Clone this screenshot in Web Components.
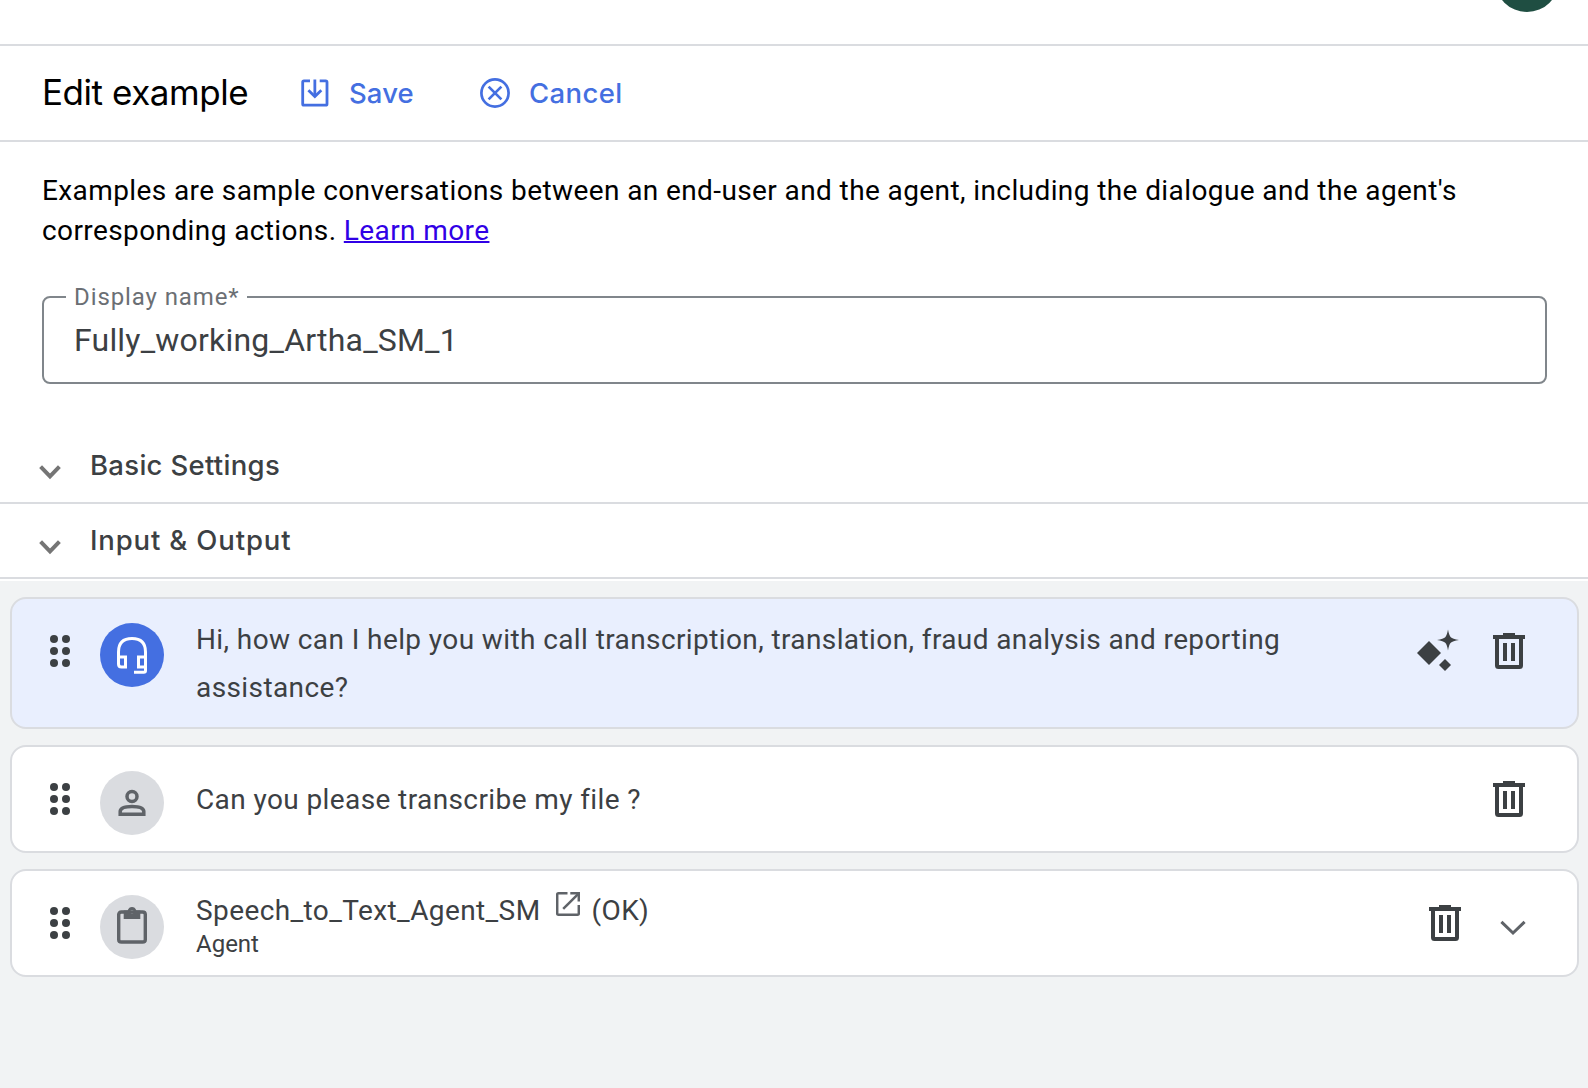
<!DOCTYPE html>
<html lang="en">
<head>
<meta charset="utf-8">
<title>Edit example</title>
<style>
html,body{margin:0;height:100%}
body{background:#fff;font-family:Roboto,"Liberation Sans",sans-serif;color:#000;overflow:hidden}
</style>
</head>
<body>
<example-editor></example-editor>
<script>
const ICONS = {
  save: [28, 28, '<g fill="none" stroke="currentColor"><path d="M9 1.9H3Q1.7 1.9 1.7 3.2V24.9Q1.7 26.2 3 26.2H24.7Q26 26.2 26 24.9V3.2Q26 1.9 24.7 1.9H18.7" stroke-width="2.8"/><path d="M13.85 .5V17" stroke-width="2.8"/><path d="M7.4 11.2L13.85 17.5L20.3 11.2" stroke-width="2.8"/></g>'],
  cancel: [30, 30, '<g fill="none" stroke="currentColor" stroke-width="2.7"><circle cx="15" cy="15" r="13.6"/><path d="M8.6 8.6L21.4 21.4M21.4 8.6L8.6 21.4"/></g>'],
  fold: [22, 15, '<path d="M1.6 1.6L11 11.3L20.4 1.6" fill="none" stroke="currentColor" stroke-width="4"/>'],
  chevron: [26, 16, '<path d="M1.4 1.8L13 13L24.6 1.8" fill="none" stroke="currentColor" stroke-width="3"/>'],
  drag: [20, 32, '<g fill="currentColor"><circle cx="4" cy="4" r="4"/><circle cx="16" cy="4" r="4"/><circle cx="4" cy="16" r="4"/><circle cx="16" cy="16" r="4"/><circle cx="4" cy="28" r="4"/><circle cx="16" cy="28" r="4"/></g>'],
  trash: [32, 36, '<g fill="none" stroke="currentColor" stroke-width="4"><path d="M0 4H32"/><path d="M4 5V32.5Q4 34 5.5 34H26.5Q28 34 28 32.5V5"/><path d="M12 10V28M20 10V28"/><path d="M10 1H22" stroke-width="2"/></g>'],
  sparkle: [42, 42, '<g fill="currentColor"><path d="M12 12L24 24L12 36L0 24Z"/><path d="M28 30L34 36L28 42L22 36Z"/><path d="M31 0.5Q32 6.5 33.8 8.2Q35.5 10 42 11Q35.5 12 33.8 13.8Q32 15.5 31 21.5Q30 15.5 28.2 13.8Q26.5 12 20 11Q26.5 10 28.2 8.2Q30 6.5 31 0.5Z"/></g>'],
  headset: [30, 37, '<g fill="none" stroke="currentColor" stroke-width="3"><path d="M1.5 20V15Q1.5 1.5 15 1.5Q28.5 1.5 28.5 15V20"/><path d="M1.5 20H8.5V30H4.5Q1.5 30 1.5 27Z"/><path d="M28.5 20H21.5V30H28.5Z"/><path d="M28.5 29V33.5Q28.5 35.2 26.8 35.2H17"/></g>'],
  person: [28, 28, '<g fill="none" stroke="currentColor" stroke-width="3.5"><circle cx="14" cy="7.4" r="5"/><path d="M2.2 25.2V22.6Q2.2 17.4 14 17.4Q25.8 17.4 25.8 22.6V25.2Z"/></g>'],
  clip: [30, 37, '<path d="M4.5 5H25.5Q28.3 5 28.3 7.6V32.4Q28.3 35 25.5 35H4.5Q1.7 35 1.7 32.4V7.6Q1.7 5 4.5 5Z" fill="none" stroke="currentColor" stroke-width="3.4"/><path fill-rule="evenodd" fill="currentColor" d="M6.7 3.4H10.6Q12 0 15 0Q18 0 19.4 3.4H23.3V12H6.7ZM15 3A1.9 1.9 0 1 0 15.01 3Z"/>'],
  open: [24, 24, '<g fill="none" stroke="currentColor" stroke-width="2.5"><path d="M11.5 1.3H2.4Q1.2 1.3 1.2 2.5V21.5Q1.2 22.7 2.4 22.7H21.6Q22.8 22.7 22.8 21.5V13"/><path d="M14.3 1.3H22.8V9.6"/><path d="M22.3 1.8L7.2 16.8"/></g>']
};

class Base extends HTMLElement {
  constructor() { super(); this.attachShadow({ mode: 'open' }); }
  connectedCallback() { this.shadowRoot.innerHTML = this.render(); }
  a(n) { return this.getAttribute(n) || ''; }
}

customElements.define('ui-icon', class extends Base {
  render() {
    const [w, h, body] = ICONS[this.a('name')];
    return `<style>:host{display:block;flex:none;width:${w}px;height:${h}px}svg{display:block}</style>
      <svg width="${w}" height="${h}" viewBox="0 0 ${w} ${h}">${body}</svg>`;
  }
});

customElements.define('top-bar', class extends Base {
  render() {
    return `<style>:host{display:flex;justify-content:flex-end;height:44px;padding-right:29px;border-bottom:2px solid #dadce0;overflow:hidden}
      div{width:64px;height:64px;margin-top:-52px;border-radius:50%;background:#1f4e42}</style><div></div>`;
  }
});

customElements.define('action-button', class extends Base {
  render() {
    return `<style>:host{display:flex;align-items:center;color:#446fe1;font:450 27.5px/36px Inter,sans-serif}
      span{white-space:nowrap}</style>
      <ui-icon name="${this.a('icon')}"></ui-icon><span><slot></slot></span>`;
  }
});

customElements.define('page-header', class extends Base {
  render() {
    return `<style>:host{display:flex;align-items:center;height:94px;padding-left:42px;border-bottom:2px solid #dadce0}
      h1{margin:-2px 0 0;width:259px;font:400 35px/44px Inter,sans-serif;white-space:nowrap;letter-spacing:-.45px}
      action-button{gap:20px}
      .save{width:179px;letter-spacing:.1px}
      .cancel{gap:19px;letter-spacing:.4px}</style>
      <h1>Edit example</h1>
      <action-button class="save" icon="save">Save</action-button>
      <action-button class="cancel" icon="cancel">Cancel</action-button>`;
  }
});

customElements.define('text-field', class extends Base {
  render() {
    return `<style>:host{display:block}
      fieldset{box-sizing:border-box;height:99px;margin:-11px 0 0;padding:0 30px;border:2px solid #80868b;border-radius:8px;min-width:0}
      legend{margin-left:-8px;padding:0 9px 0 8px;height:24px;font-size:24px;line-height:24px;letter-spacing:.9px;color:#6b6f74;width:164px;white-space:nowrap}
      .value{font-size:32px;line-height:40px;letter-spacing:.2px;color:#3c4043;padding-top:11px}</style>
      <fieldset><legend>${this.a('label')}</legend><div class="value"><slot></slot></div></fieldset>`;
  }
});

customElements.define('fold-section', class extends Base {
  render() {
    return `<style>:host{display:flex;align-items:center;height:73px;padding-left:39px;gap:29px;border-bottom:2px solid #dadce0;background:#fff;font:450 27.5px/36px Inter,sans-serif;color:#3c4043}
      ui-icon{color:#757575;margin-top:13px}
      span{margin-top:-2px}</style>
      <ui-icon name="fold"></ui-icon><span><slot></slot></span>`;
  }
});

customElements.define('turn-card', class extends Base {
  render() {
    const agent = this.a('tone') === 'agent';
    return `<style>:host{display:flex;box-sizing:border-box;border:2px solid #dadce0;border-radius:16px;padding:24px 52px 0 38px;
        background:${agent ? '#e9effe' : '#fff'};color:#3c4043;font-size:28px;line-height:48px;letter-spacing:.4px}
      .drag{margin-top:12px}
      .avatar{display:flex;align-items:center;justify-content:center;flex:none;width:64px;height:64px;margin-left:30px;border-radius:50%;
        background:${agent ? '#446fe1' : '#dadce0'};color:${agent ? '#fff' : '#5f6368'}}
      .avatar ui-icon{margin-bottom:${this.a('icon') === 'clip' ? 3 : 0}px}
      .body{flex:1;margin-left:32px;min-width:0}
      .actions{display:flex;flex:none;margin-top:10px;color:#3c4043}</style>
      <ui-icon class="drag" name="drag"></ui-icon>
      <div class="avatar"><ui-icon name="${this.a('icon')}"></ui-icon></div>
      <div class="body"><slot></slot></div>
      <div class="actions"><slot name="actions"></slot></div>`;
  }
});

customElements.define('example-editor', class extends Base {
  render() {
    return `<style>
      :host{display:flex;flex-direction:column;height:100vh}
      .intro{padding:29px 41px 45px 42px}
      p{margin:0 0 45px;font-size:28px;line-height:40px;letter-spacing:.4px;white-space:nowrap}
      a{color:#3000e6;text-decoration:underline;text-decoration-thickness:2px}
      .basic{letter-spacing:.3px}
      .io{letter-spacing:.85px}
      .list{flex:1;display:flex;flex-direction:column;gap:16px;margin-top:2px;padding:16px 9px 0 10px;background:#f1f3f4}
      turn-card{height:108px;flex:none}
      turn-card.first{height:132px}
      turn-card.tool{padding-right:51px}
      .msg{margin-top:-7px}
      .one{margin-top:5px}
      .agent{display:flex;margin-top:-8px;height:40px}
      .agent ui-icon{margin:5px 12px 0 15px;color:#5f6368}
      .sub{font-size:24px;line-height:28px;margin-top:3px;letter-spacing:0}
      .spark{margin:-4px 34px 0 0}
      .chev{margin:15px 0 0 39px;color:#5f6368}
      </style>
      <top-bar></top-bar>
      <page-header></page-header>
      <div class="intro">
        <p>Examples are sample conversations between an end-user and the agent, including the dialogue and the agent's<br>corresponding actions. <a href="#">Learn more</a></p>
        <text-field label="Display name*">Fully_working_Artha_SM_1</text-field>
      </div>
      <fold-section class="basic">Basic Settings</fold-section>
      <fold-section class="io">Input &amp; Output</fold-section>
      <div class="list">
        <turn-card class="first" tone="agent" icon="headset">
          <div class="msg">Hi, how can I help you with call transcription, translation, fraud analysis and reporting<br>assistance?</div>
          <ui-icon slot="actions" class="spark" name="sparkle"></ui-icon>
          <ui-icon slot="actions" name="trash"></ui-icon>
        </turn-card>
        <turn-card icon="person">
          <div class="one">Can you please transcribe my file ?</div>
          <ui-icon slot="actions" name="trash"></ui-icon>
        </turn-card>
        <turn-card class="tool" icon="clip">
          <div class="agent"><span>Speech_to_Text_Agent_SM</span><ui-icon name="open"></ui-icon><span>(OK)</span></div>
          <div class="sub">Agent</div>
          <ui-icon slot="actions" name="trash"></ui-icon>
          <ui-icon slot="actions" class="chev" name="chevron"></ui-icon>
        </turn-card>
      </div>`;
  }
});
</script>
</body>
</html>
